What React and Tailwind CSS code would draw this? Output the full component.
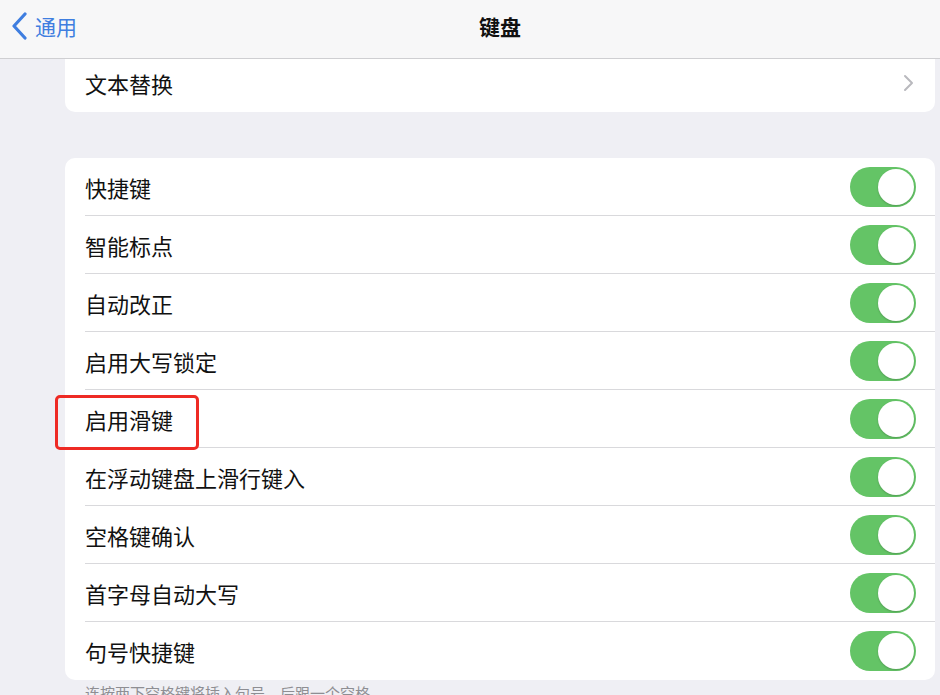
import React from "react";

const rows = [
  "快捷键",
  "智能标点",
  "自动改正",
  "启用大写锁定",
  "启用滑键",
  "在浮动键盘上滑行键入",
  "空格键确认",
  "首字母自动大写",
  "句号快捷键",
];

function Toggle() {
  return (
    <div className="w-[66px] h-[40px] rounded-full bg-[#64c466] flex items-center justify-end pr-[2px]">
      <div className="w-[36px] h-[36px] rounded-full bg-white shadow-[0_1px_2px_rgba(0,0,0,0.2)]" />
    </div>
  );
}

export default function App() {
  return (
    <div
      className="relative w-[940px] h-[695px] overflow-hidden bg-[#efeff4] text-[#111]"
      style={{ fontFamily: '"Noto Sans CJK SC", "Noto Sans", sans-serif' }}
    >
      <div className="relative h-[59px] bg-[#f7f7f8] border-b border-[#cfcfd2] flex items-center pb-[6px]">
        <div className="flex items-center pl-[11px] gap-[6px] text-[#3f7ee0] text-[21px]">
          <svg width="18" height="28" viewBox="0 0 18 28" fill="none">
            <path d="M14 2 L3 14 L14 26" stroke="#3f7ee0" strokeWidth="3.2" strokeLinecap="round" strokeLinejoin="round" />
          </svg>
          <span className="leading-none">通用</span>
        </div>
        <div className="ml-[402px] text-[21px] font-bold leading-none">键盘</div>
      </div>

      <div className="ml-[65px] w-[870px] h-[53px] bg-white rounded-b-[10px] flex items-center justify-between pl-[20px] pr-[20px] pb-[5px]">
        <span className="text-[22px] leading-none">文本替换</span>
        <svg width="12" height="18" viewBox="0 0 12 18" fill="none">
          <path d="M2 2 L9 9 L2 16" stroke="#b9b9be" strokeWidth="2" strokeLinecap="round" strokeLinejoin="round" />
        </svg>
      </div>

      <div className="ml-[65px] mt-[46px] w-[870px] bg-white rounded-[10px] overflow-hidden">
        {rows.map((r, i) => (
          <div key={r} className="pl-[20px]">
            <div
              className={
                "h-[58px] flex items-center justify-between pr-[19px] " +
                (i < rows.length - 1 ? "border-b border-[#d9d9dc]" : "")
              }
            >
              <span className="text-[22px] leading-none">{r}</span>
              <Toggle />
            </div>
          </div>
        ))}
      </div>

      <div className="ml-[85px] mt-[5px] text-[15px] text-[#8e8e93] leading-none">
        连按两下空格键将插入句号，后跟一个空格。
      </div>

      <div className="absolute left-[55px] top-[395px] w-[144px] h-[55px] border-[3px] border-[#ee2a24] rounded-[5px]" />
    </div>
  );
}
